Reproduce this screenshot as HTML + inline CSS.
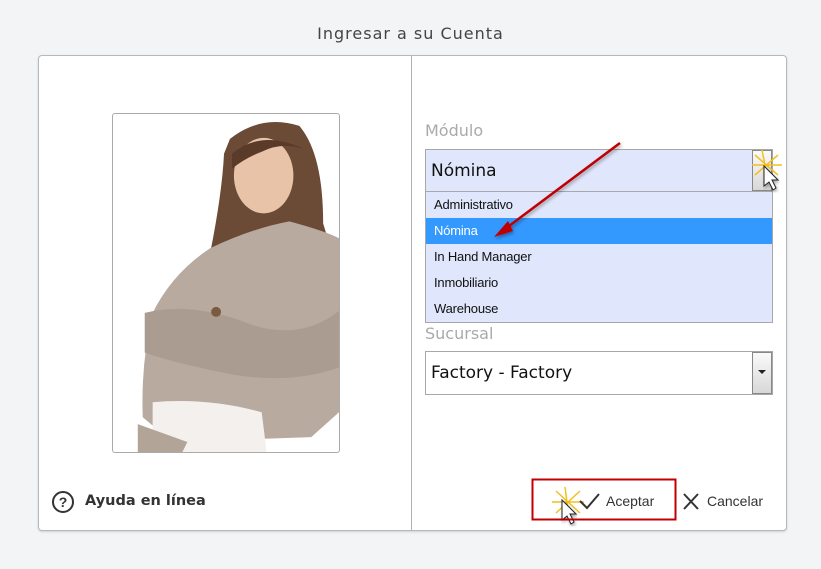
<!DOCTYPE html>
<html><head><meta charset="utf-8"><style>
body{margin:0;width:821px;height:569px;background:#f3f4f6;font-family:"Liberation Sans","DejaVu Sans",sans-serif;position:relative;overflow:hidden}
.a{position:absolute}
.title{left:0;width:821px;top:24px;text-align:center;font-size:16px;color:#444;letter-spacing:1px;font-family:"DejaVu Sans",sans-serif}
.panel{left:38px;top:55px;width:747px;height:474px;background:#fff;border:1px solid #b8b8b8;border-radius:4px;box-shadow:0 1px 2px rgba(0,0,0,.15)}
.div{left:411px;top:56px;width:1px;height:474px;background:#b0b0b0}
.lbl{font-size:16px;color:#aaa;font-family:"DejaVu Sans",sans-serif}
.sel{border:1px solid #a8a8a8;font-size:17px;color:#111;font-family:"DejaVu Sans",sans-serif;box-sizing:border-box;padding-left:5px}
.btn{width:20px;border:1px solid #888;box-sizing:border-box;background:linear-gradient(#fafafa,#d8d8d8)}
.opt{left:426px;width:346px;height:26px;line-height:26px;font-size:13px;color:#111;padding-left:8px;box-sizing:border-box;letter-spacing:-0.2px}
</style></head><body>
<div class="a title">Ingresar a su Cuenta</div>
<div class="a panel"></div>
<div class="a div"></div>
<div class="a" style="left:112px;top:113px;width:226px;height:338px;border:1px solid #aaa;border-radius:3px;overflow:hidden;background:#fff">
<svg width="226" height="338" viewBox="0 0 228 340" preserveAspectRatio="none">
<path d="M118 25 Q150 0 188 12 Q212 40 212 110 L218 130 L150 150 L98 140 Q110 80 112 40Z" fill="#6b4a36"/>
<ellipse cx="152" cy="62" rx="30" ry="38" fill="#e9c3a8"/>
<path d="M120 40 Q150 15 192 35 Q170 28 150 38 Q134 44 120 55Z" fill="#5a3a28"/>
<path d="M98 135 Q140 115 178 108 Q215 118 228 125 L228 300 L200 325 L60 330 L30 305 Q28 250 40 200 Q60 160 98 135Z" fill="#b9aa9f"/>
<path d="M32 200 Q80 188 140 212 Q190 228 228 198 L228 255 Q180 272 120 262 Q60 250 32 240Z" fill="#ab9c91"/>
<path d="M40 290 Q95 285 150 300 L155 340 L40 340Z" fill="#f4f0ee"/>
<path d="M25 312 L75 330 L70 340 L25 340Z" fill="#b3a498"/>
<circle cx="104" cy="199" r="5" fill="#7a5a40"/>
</svg></div>
<div class="a" style="left:52px;top:491px;width:18px;height:18px;border:2px solid #333;border-radius:50%;text-align:center;font-size:14px;font-weight:bold;line-height:18px;color:#333">?</div>
<div class="a" style="left:85px;top:493px;font-size:14.5px;font-weight:bold;color:#333;font-family:'DejaVu Sans',sans-serif">Ayuda en línea</div>

<div class="a lbl" style="left:425px;top:121px">Módulo</div>
<div class="a sel" style="left:425px;top:149px;width:348px;height:43px;background:#e0e6fb;line-height:42px">Nómina</div>
<div class="a btn" style="left:752px;top:150px;height:41px"></div>
<div class="a" style="left:425px;top:191px;width:348px;height:132px;background:#e0e6fb;border:1px solid #a8a8a8;box-sizing:border-box"></div>
<div class="a opt" style="top:192px">Administrativo</div>
<div class="a opt" style="top:218px;background:#3399ff;color:#fff">Nómina</div>
<div class="a opt" style="top:244px">In Hand Manager</div>
<div class="a opt" style="top:270px">Inmobiliario</div>
<div class="a opt" style="top:296px">Warehouse</div>
<div class="a lbl" style="left:425px;top:324px">Sucursal</div>
<div class="a sel" style="left:425px;top:351px;width:348px;height:44px;background:#fff;line-height:43px">Factory - Factory</div>
<div class="a btn" style="left:752px;top:352px;height:42px"></div>
<div class="a" style="left:758px;top:370px;width:0;height:0;border-left:4px solid transparent;border-right:4px solid transparent;border-top:4px solid #222"></div>

<svg class="a" style="left:0;top:0" width="821" height="569">
<defs><filter id="sh"><feDropShadow dx="1" dy="2" stdDeviation="1.5" flood-opacity=".35"/></filter></defs>
<g filter="url(#sh)"><line x1="620" y1="143" x2="505" y2="229" stroke="#c00000" stroke-width="2.5"/>
<path d="M494 237 L508 221 L513 231Z" fill="#c00000"/></g>
<g stroke="#f2c020" stroke-width="1.5"><path d="M762 150 L768 180 M752 165 L782 165 M755 155 L778 175 M778 155 L755 175"/>
<path d="M565 487 L569 517 M552 502 L584 502 M556 491 L580 513 M580 491 L556 513"/></g>
<path d="M764 166 L764 186 L769 182 L773 190 L776 188 L772 180 L778 180Z" fill="#fff" stroke="#222" filter="url(#sh)"/>
<path d="M562 500 L562 520 L567 516 L571 524 L574 522 L570 514 L576 514Z" fill="#fff" stroke="#222" filter="url(#sh)"/>
<rect x="532.5" y="479.5" width="143" height="40" fill="none" stroke="#c00000" stroke-width="2"/>
<path d="M580 501 L587 508 L599 494" fill="none" stroke="#333" stroke-width="2"/>
<path d="M684 494 L698 509 M698 494 L684 509" stroke="#333" stroke-width="2"/>
</svg>
<div class="a" style="left:606px;top:493px;font-size:14px;color:#333">Aceptar</div>
<div class="a" style="left:707px;top:493px;font-size:14px;color:#333">Cancelar</div>
</body></html>
